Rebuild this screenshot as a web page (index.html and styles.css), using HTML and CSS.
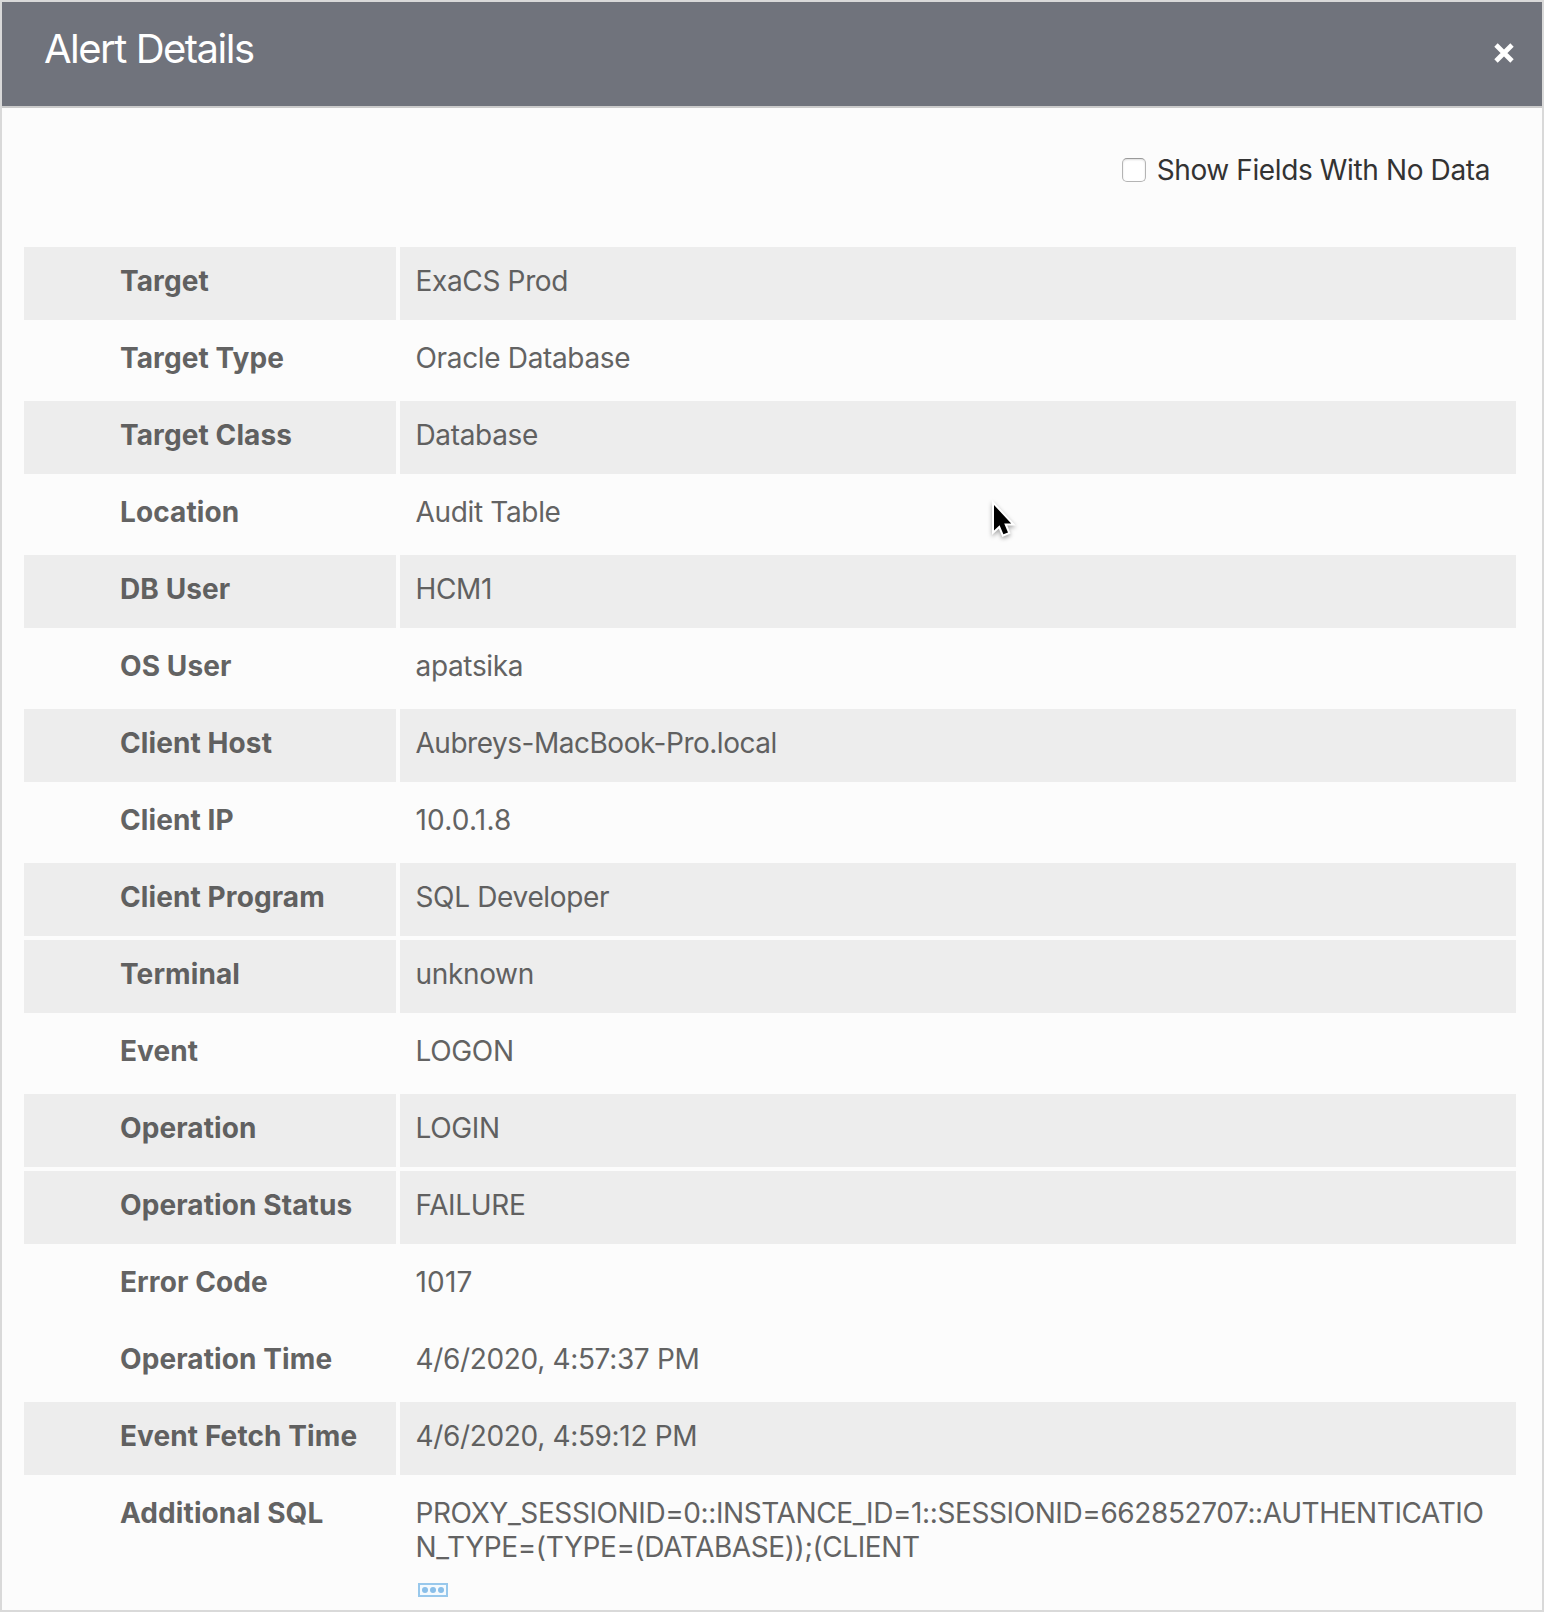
FILE: index.html
```html
<!DOCTYPE html>
<html lang="en">
<head>
<meta charset="utf-8">
<title>Alert Details</title>
<link rel="stylesheet" href="styles.css">
</head>
<body>
<main class="dialog">
  <header class="dialog-header">
    <h1 class="title">Alert Details</h1>
    <svg class="close" viewBox="0 0 20 20" role="img" aria-label="Close"><path d="M2 2 18 18M18 2 2 18"/></svg>
  </header>
  <div class="options">
    <span class="checkbox"></span>
    <span class="option-label">Show Fields With No Data</span>
  </div>
  <dl class="details">
    <div class="row shaded"><dt>Target</dt><dd>ExaCS Prod</dd></div>
    <div class="row"><dt>Target Type</dt><dd>Oracle Database</dd></div>
    <div class="row shaded"><dt>Target Class</dt><dd>Database</dd></div>
    <div class="row"><dt>Location</dt><dd>Audit Table</dd></div>
    <div class="row shaded"><dt>DB User</dt><dd>HCM1</dd></div>
    <div class="row"><dt>OS User</dt><dd>apatsika</dd></div>
    <div class="row shaded"><dt>Client Host</dt><dd class="host">Aubreys-MacBook-Pro.local</dd></div>
    <div class="row"><dt>Client IP</dt><dd class="number">10.0.1.8</dd></div>
    <div class="row shaded"><dt>Client Program</dt><dd>SQL Developer</dd></div>
    <div class="row shaded"><dt>Terminal</dt><dd>unknown</dd></div>
    <div class="row"><dt>Event</dt><dd>LOGON</dd></div>
    <div class="row shaded"><dt>Operation</dt><dd>LOGIN</dd></div>
    <div class="row shaded"><dt>Operation Status</dt><dd>FAILURE</dd></div>
    <div class="row"><dt>Error Code</dt><dd class="number">1017</dd></div>
    <div class="row"><dt>Operation Time</dt><dd>4/6/2020, 4:57:37 PM</dd></div>
    <div class="row shaded"><dt>Event Fetch Time</dt><dd>4/6/2020, 4:59:12 PM</dd></div>
    <div class="row"><dt>Additional SQL</dt><dd class="sql"><span>PROXY_SESSIONID=0::INSTANCE_ID=1::SESSIONID=662852707::AUTHENTICATIO<br>N_TYPE=(TYPE=(DATABASE));(CLIENT</span>
      <svg class="more" viewBox="0 0 30 14" role="img" aria-label="More"><rect x="1" y="1" width="28" height="12"/><circle cx="7" cy="7" r="3"/><circle cx="15" cy="7" r="3"/><circle cx="23" cy="7" r="3"/></svg></dd></div>
  </dl>
  <svg class="pointer" viewBox="0 0 24 40" aria-hidden="true"><path d="M3 3V28.5L8.6 23.3 12.4 32.3 17 30.4 13.2 21.4H20.2Z"/></svg>
</main>
</body>
</html>
```
FILE: styles.css
```css
* { box-sizing: border-box; }
body {
  margin: 0;
  font-family: Inter, "Liberation Sans", sans-serif;
  font-size: 28px;
  line-height: 34px;
  color: #636363;
}
.dialog {
  position: relative;
  height: 1612px;
  border: 2px solid #d9d9d9;
  background: #fcfcfc;
  overflow: hidden;
}
.dialog-header {
  display: flex;
  justify-content: space-between;
  height: 106px;
  padding: 23px 28px 0 42px;
  background: #70737c;
  border-bottom: 2px solid #cbcbcb;
  color: #fff;
}
.title {
  margin: 0;
  font-size: 40px;
  line-height: 48px;
  font-weight: 400;
  letter-spacing: -1.5px;
}
.close {
  width: 20px;
  height: 20px;
  margin-top: 18px;
  fill: none;
  stroke: #fff;
  stroke-width: 4.8;
}
.options {
  display: flex;
  justify-content: flex-end;
  gap: 11px;
  padding: 45px 52px 0 0;
  height: 139px;
  color: #333;
}
.checkbox {
  width: 24px;
  height: 24px;
  margin-top: 5px;
  border: 1px solid #b4b4b4;
  border-top-color: #9a9a9a;
  border-radius: 5px;
  background: #fff;
  box-shadow: inset 0 1px 2px #ddd;
}
.option-label { letter-spacing: -0.38px; }
.details {
  display: flex;
  flex-direction: column;
  gap: 4px;
  margin: 0 26px 0 22px;
}
.row {
  display: grid;
  grid-template-columns: 372px 1fr;
  gap: 4px;
  min-height: 73px;
}
.row dt, .row dd { margin: 0; padding-top: 17px; white-space: nowrap; }
.row dt { padding-left: 96px; font-weight: 700; letter-spacing: 0.1px; }
.row dd { padding-left: 15.5px; letter-spacing: -0.34px; }
.row .host { letter-spacing: -0.48px; }
.row .sql { letter-spacing: -0.4px; }
.row .number { letter-spacing: 0.2px; }
.shaded dt, .shaded dd { background: #ededed; color: #606060; }
.more {
  display: block;
  width: 30px;
  height: 14px;
  margin: 19px 0 0 2px;
  fill: #8abfe9;
}
.more rect { fill: #f4fafe; stroke: #98c8ec; stroke-width: 2; }
.pointer {
  position: absolute;
  left: 989px;
  top: 500px;
  width: 24px;
  height: 40px;
  overflow: visible;
  stroke: #fff;
  stroke-width: 4;
  paint-order: stroke;
  filter: drop-shadow(0 2px 2px rgba(0, 0, 0, 0.35));
}
```
